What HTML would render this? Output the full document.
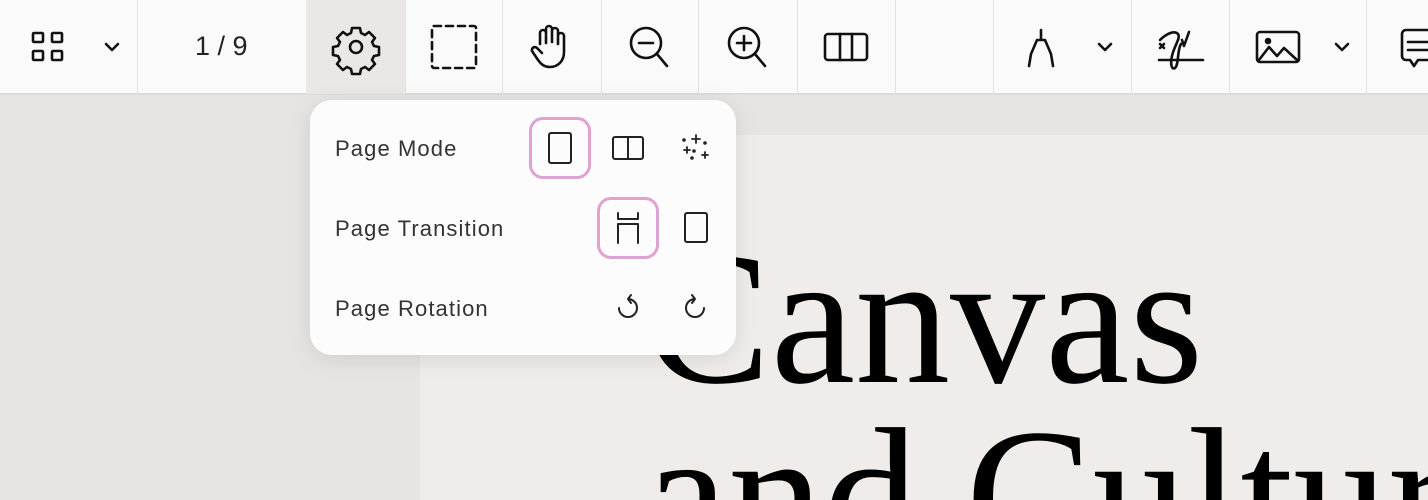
<!DOCTYPE html>
<html style="overflow:hidden;width:1428px;height:500px"><head><style>
*{margin:0;padding:0;box-sizing:border-box}
body{width:1428px;height:500px;overflow:hidden;background:#e6e5e3;font-family:"Liberation Sans",sans-serif;position:relative}
.tb{position:absolute;left:0;top:0;width:1428px;height:95px;background:#fafafa;border-bottom:2px solid #dcdcda;z-index:2}
.sep{position:absolute;top:0;width:1px;height:94px;background:#e2e2e0}
.ic{position:absolute}
.page{position:absolute;left:420px;top:135px;width:1008px;height:365px;background:#efece9}
.clip{position:absolute;left:0;top:0;width:1428px;height:500px;overflow:hidden}
.big{position:absolute;left:644px;font-family:"Liberation Serif",serif;font-size:190px;color:#000;white-space:nowrap;line-height:1}
.pop{position:absolute;left:310px;top:100px;width:426px;height:255px;background:#fcfcfc;border-radius:22px;box-shadow:0 4px 24px rgba(0,0,0,.10);z-index:3}
.lbl{position:absolute;left:25px;font-size:22px;color:#333;letter-spacing:1.1px}
.hl{position:absolute;width:62px;height:62px;border:3px solid #dea3d2;border-radius:14px}
</style></head><body>
<div class="tb">
<div class="sep" style="left:137px"></div>
<div style="position:absolute;left:306px;top:0;width:99px;height:94px;background:#e9e8e6"></div>
<div class="sep" style="left:405px"></div><div class="sep" style="left:502px"></div><div class="sep" style="left:601px"></div><div class="sep" style="left:698px"></div><div class="sep" style="left:797px"></div><div class="sep" style="left:895px"></div><div class="sep" style="left:993px"></div><div class="sep" style="left:1131px"></div><div class="sep" style="left:1229px"></div><div class="sep" style="left:1366px"></div>
<svg class="ic" style="left:0;top:0" width="1428" height="94" fill="none" stroke="#111" stroke-width="2.6" stroke-linecap="round" stroke-linejoin="round">
<rect x="33" y="33" width="10" height="9" rx="1"/><rect x="52" y="33" width="10" height="9" rx="1"/><rect x="33" y="51" width="10" height="9" rx="1"/><rect x="52" y="51" width="10" height="9" rx="1"/>
<path d="M106 44l6 6 6-6"/>
<circle cx="356" cy="47" r="6"/>
<path d="M352 28h8l1 5 4 2 4-3 6 6-3 4 2 4 5 1v8l-5 1-2 4 3 4-6 6-4-3-4 2-1 5h-8l-1-5-4-2-4 3-6-6 3-4-2-4-5-1v-8l5-1 2-4-3-4 6-6 4 3 4-2z"/>
<rect x="432" y="26" width="44" height="42" rx="2" stroke-dasharray="7 5"/>
<path d="M540 44V33a3 3 0 016 0v10M546 42V29a3 3 0 016 0v13M552 42V31a3 3 0 016 0v12M558 44v-8a3 3 0 016 0v16c0 9-6 15-14 15-6 0-9-3-12-7l-6-9a3 3 0 015-3l5 5"/>
<circle cx="646" cy="43" r="15"/><path d="M657 54l10 12M639 43h14"/>
<circle cx="744" cy="43" r="15"/><path d="M755 54l10 12M737 43h14M744 36v14"/>
<rect x="825" y="34" width="42" height="26" rx="3"/><path d="M840 34v26M852 34v26"/>
<path d="M1041 30v10M1037 40h8l6 14 2 12M1037 40l-6 14-2 12"/>
<path d="M1099 44l6 6 6-6"/>
<path d="M1159 60h44M1160 44l4 4M1164 44l-4 4M1160 40c6-6 14-10 18-6 3 4-4 12-6 22-2 9 0 14 3 12 4-3 2-18 6-24M1182 40l2 6 5-14"/>
<rect x="1257" y="32" width="42" height="30" rx="3"/><circle cx="1268" cy="41" r="2" fill="#111"/><path d="M1259 60l10-13 8 9 7-8 13 12"/>
<path d="M1336 44l6 6 6-6"/>
<path d="M1428 30h-22a4 4 0 00-4 4v22a4 4 0 004 4h4l4 6 4-6h10M1408 42h20M1408 50h20"/>
</svg>
<div style="position:absolute;left:195px;top:31px;font-size:27px;color:#222">1 / 9</div>
</div>
<div class="page"></div>
<div class="clip">
<div class="big" style="top:224px">Canvas</div>
<div class="big" style="top:401px">and Culture</div>
</div>
<div class="pop">
<div class="lbl" style="top:36px">Page Mode</div>
<div class="lbl" style="top:116px">Page Transition</div>
<div class="lbl" style="top:196px">Page Rotation</div>
<div class="hl" style="left:219px;top:17px"></div>
<div class="hl" style="left:287px;top:97px"></div>
<svg class="ic" style="left:0;top:0" width="426" height="255" fill="none" stroke="#222" stroke-width="2" stroke-linecap="round" stroke-linejoin="round">
<rect x="239" y="33" width="22" height="30" rx="2"/>
<rect x="303" y="37" width="30" height="22" rx="2"/><path d="M318 37v22"/>
<path d="M386 35v8M382 39h8M377 47v6M374 50h6M395 52v6M392 55h6" stroke-width="1.8"/>
<circle cx="374" cy="40" r=".8" fill="#222"/><circle cx="395" cy="43" r=".8" fill="#222"/><circle cx="384" cy="51" r=".8" fill="#222"/><circle cx="382" cy="58" r=".8" fill="#222"/>
<path d="M308 113v5M328 113v5M308 119h20M308 124h20M308 124v19M328 124v19"/>
<rect x="375" y="113" width="22" height="29" rx="2"/>
<path d="M318 199A9 9 0 1 1 309 208M321 195l-3 4 3 4"/>
<path d="M385 199A9 9 0 1 0 394 208M382 195l3 4-3 4"/>
</svg>
</div>
</body></html>
